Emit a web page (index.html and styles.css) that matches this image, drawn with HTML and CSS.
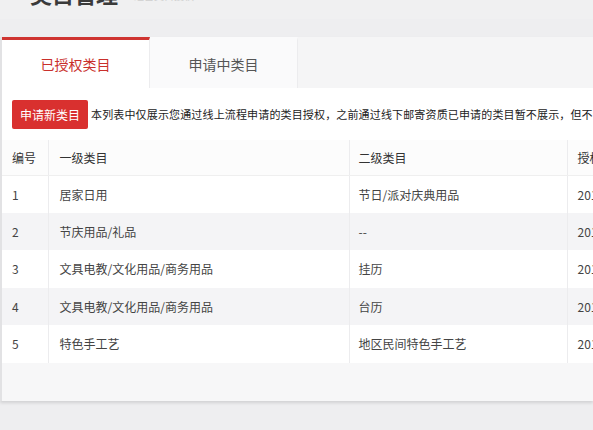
FILE: index.html
```html
<!DOCTYPE html>
<html lang="zh-CN">
<head>
<meta charset="utf-8">
<title>类目管理</title>
<link rel="stylesheet" href="styles.css">
</head>
<body>
<header class="page-head">
  <h1 class="title">类目管理</h1>
  <span class="subtitle">经营类目授权</span>
</header>
<section class="panel">
  <nav class="tabs">
    <div class="tab tab-active">已授权类目</div>
    <div class="tab">申请中类目</div>
  </nav>
  <div class="toolbar">
    <button class="btn-primary">申请新类目</button>
    <p class="notice">本列表中仅展示您通过线上流程申请的类目授权，之前通过线下邮寄资质已申请的类目暂不展示，但不影响您的正常经营。</p>
  </div>
  <div class="table-wrap">
    <table class="grid">
      <thead>
        <tr>
          <th class="c-no">编号</th>
          <th class="c-l1">一级类目</th>
          <th class="c-l2">二级类目</th>
          <th class="c-date">授权时间</th>
        </tr>
      </thead>
      <tbody>
        <tr><td>1</td><td>居家日用</td><td>节日/派对庆典用品</td><td>2018-03-12</td></tr>
        <tr><td>2</td><td>节庆用品/礼品</td><td>--</td><td>2018-03-12</td></tr>
        <tr><td>3</td><td>文具电教/文化用品/商务用品</td><td>挂历</td><td>2018-03-12</td></tr>
        <tr><td>4</td><td>文具电教/文化用品/商务用品</td><td>台历</td><td>2018-03-12</td></tr>
        <tr><td>5</td><td>特色手工艺</td><td>地区民间特色手工艺</td><td>2018-03-12</td></tr>
      </tbody>
    </table>
  </div>
  <div class="panel-foot"></div>
</section>
</body>
</html>
```

FILE: styles.css
```css
* { box-sizing: border-box; }

html, body {
  margin: 0;
  padding: 0;
}

body {
  background: #eeeef0;
  font-family: "Noto Sans CJK SC", "Liberation Sans", sans-serif;
  color: #333;
  overflow: hidden;
  width: 593px;
  height: 430px;
}

.page-head {
  display: flex;
  align-items: flex-end;
  gap: 16px;
  height: 37px;
  margin-top: -18px;
  padding: 0 0 12px 30px;
  background: #f0f0f1;
}

.title {
  margin: 0;
  font-size: 22px;
  line-height: 28px;
  font-weight: 700;
  color: #3a3a3a;
}

.subtitle {
  font-size: 10px;
  line-height: 16px;
  color: #cfcfcf;
  padding-bottom: 3px;
}

.panel {
  margin-top: 18px;
  background: #fff;
  border-left: 2px solid #e2e2e4;
  box-shadow: 0 2px 3px rgba(0, 0, 0, 0.12);
  overflow: hidden;
}

.tabs {
  display: flex;
  height: 51px;
  background: #f5f5f6;
}

.tab {
  width: 148px;
  display: flex;
  align-items: center;
  justify-content: center;
  font-size: 14px;
  color: #555;
  background: #fafafb;
  border-top: 3px solid transparent;
  border-right: 1px solid #ececee;
}

.tab-active {
  width: 148px;
  background: #fff;
  color: #c9302c;
  border-top-color: #cf3431;
  border-right: 1px solid #ececee;
}

.toolbar {
  display: flex;
  align-items: center;
  gap: 3px;
  height: 52px;
  padding: 0 10px 0 10px;
  white-space: nowrap;
}

.btn-primary {
  flex: none;
  height: 29px;
  width: 76px;
  padding: 0;
  border: none;
  border-radius: 2px;
  background: #d9302f;
  color: #fff;
  font-family: inherit;
  font-size: 12px;
}

.notice {
  margin: 0;
  font-size: 11px;
  letter-spacing: 0.15px;
  color: #222;
  white-space: nowrap;
}

.table-wrap {
  width: 100%;
}

.grid {
  border-collapse: collapse;
  width: 800px;
  font-size: 12px;
  color: #444;
}

.grid th {
  height: 35px;
  text-align: left;
  font-weight: 400;
  color: #333;
  background: #fcfcfc;
  border-bottom: 1px solid #efefef;
}

.grid th,
.grid td {
  padding: 0 10px;
  border-right: 1px solid #ececee;
  white-space: nowrap;
}

.grid td {
  height: 37.5px;
}

.grid .c-no { width: 46px; }
.grid .c-l1 { width: 301px; }
.grid .c-l2 { width: 218px; }

.grid th.c-l1, .grid td:nth-child(2) { padding-left: 11px; }
.grid th.c-l2, .grid td:nth-child(3) { padding-left: 9px; }

.grid tbody tr:nth-child(even) td {
  background: #f4f4f6;
}

.panel-foot {
  height: 38px;
  background: #f7f7f8;
}
```
